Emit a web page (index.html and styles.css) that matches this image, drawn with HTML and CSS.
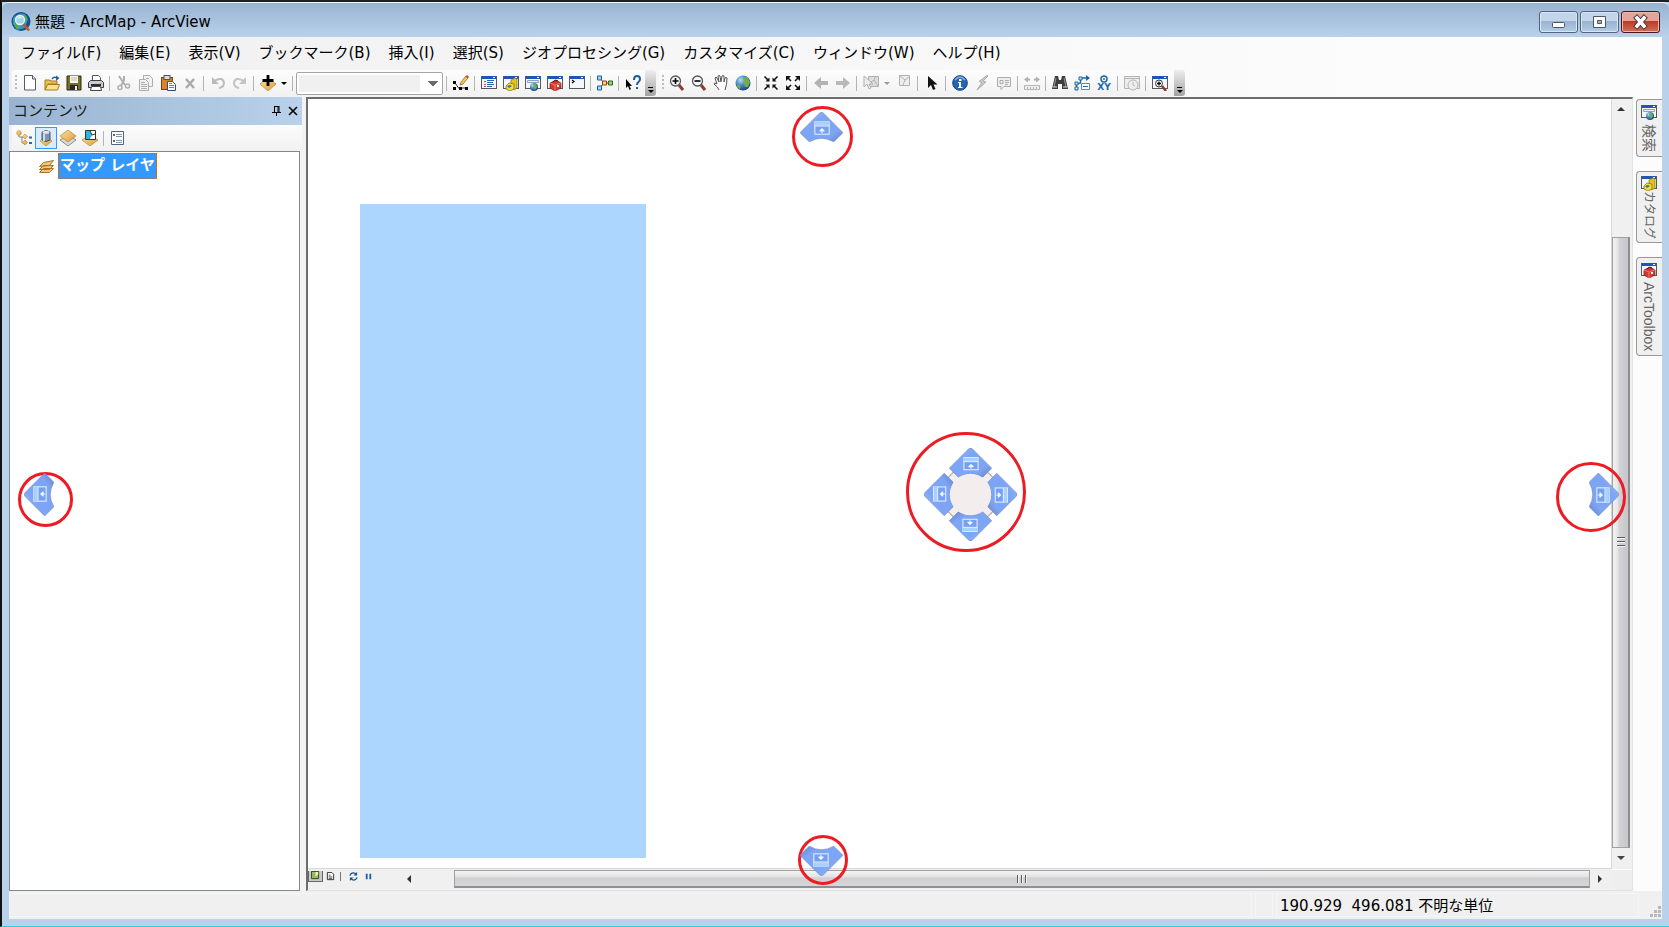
FILE: index.html
```html
<!DOCTYPE html>
<html lang="ja">
<head>
<meta charset="UTF-8" />
<meta name="viewport" content="width=device-width, initial-scale=1" />
<title>無題 - ArcMap - ArcView</title>
<link rel="stylesheet" href="styles.css">
</head>
<body>

<svg class="defs" width="0" height="0" aria-hidden="true">
  <defs>
    <linearGradient id="guide-fill" x1="0" y1="0" x2="1" y2="1">
      <stop offset="0" stop-color="#a9c3f7" />
      <stop offset="0.35" stop-color="#7da5f5" />
      <stop offset="0.75" stop-color="#7da5f5" />
      <stop offset="1" stop-color="#6380bd" />
    </linearGradient>
    <linearGradient id="gold" x1="0" y1="0" x2="1" y2="1">
      <stop offset="0" stop-color="#fbe3a6" />
      <stop offset="1" stop-color="#d99a35" />
    </linearGradient>
    <radialGradient id="globe-fill" cx="0.35" cy="0.3" r="0.8">
      <stop offset="0" stop-color="#b9dcf7" />
      <stop offset="0.5" stop-color="#3b7cc4" />
      <stop offset="1" stop-color="#123a75" />
    </radialGradient>
    <g id="guide">
      <path d="M44 1 Q46 -1 48 1 L67 20 L58 29 Q46 22 34 29 L25 20 Z" fill="url(#guide-fill)" stroke="#7187b8" stroke-width="0.6" />
      <rect x="39.5" y="9.5" width="14" height="12" fill="#76a0f3" stroke="#e8f2ff" />
      <path d="M40 10h13v3h-13z" fill="#a9d2ff" />
      <path d="M39.5 13.5h14" stroke="#e8f2ff" />
      <path d="M46.500 15.500l2.500 2.500v1h-2v1.500h-1v-1.500h-2v-1z" fill="#f2f7ff" />
    </g>
  </defs>
  <symbol id="win" viewBox="0 0 16 16">
    <rect x="0.500" y="1.500" width="15" height="12" fill="#f4f8fc" stroke="#55585c" />
    <path d="M1 1h14v3H1z" fill="#1f56b5" />
    <path d="M12 2h2v1h-2z" fill="#fff" />
  </symbol>
  <symbol id="i-catalog" viewBox="0 0 16 16">
    <use href="#win" width="16" height="16" />
    <path d="M8 5l4-2 2 1v9l-3 2-3-2z" fill="#e0c51c" stroke="#8a7405" stroke-width="0.700" />
    <path d="M3 11l3-3 5 1v5l-4 2-4-2z" fill="#f1dc3d" stroke="#7c6a0a" stroke-width="0.700" />
    <path d="M4 11l3-1 2 1-3 2z" fill="#3b6fa6" />
  </symbol>
  <symbol id="i-search" viewBox="0 0 16 16">
    <use href="#win" width="16" height="16" />
    <path d="M2.500 5.500h11v2h-11z" fill="#eaf0f7" stroke="#8ca3bd" />
    <circle cx="9" cy="12" r="4" fill="url(#globe-fill)" />
    <path d="M8 9l3 0 1 3-2 3-1-2z" fill="#6cb33f" />
  </symbol>
  <symbol id="i-toolbox" viewBox="0 0 16 16">
    <use href="#win" width="16" height="16" />
    <path d="M3 8l6-3 5 3v5l-6 3-5-3z" fill="#d8382b" stroke="#7f1a12" stroke-width="0.700" />
    <path d="M3 8l5 2 6-2M8 10v6" fill="none" stroke="#f18a7d" stroke-width="0.800" />
    <path d="M6 7q2-3 5-1" fill="none" stroke="#531009" />
    <path d="M10 10h2v2h-2z" fill="#fff" />
  </symbol>
</svg>

<header class="titlebar">
  <svg class="app-icon" viewBox="0 0 20 20">
    <circle cx="10" cy="9.500" r="9.500" fill="#12518c" />
    <path d="M2 6q5-6 12-4l3 5-3 9-8 2-4-6z" fill="#3f93b8" />
    <path d="M3 11l4 1 2 4-3 1q-3-3-3-6zM12 2l4 3-1 4-4-3z" fill="#4fae54" />
    <circle cx="9" cy="8" r="4.500" fill="#9fd3ea" stroke="#eef5f8" stroke-width="1.300" />
    <path d="M6.500 7q2-3 4-1" fill="none" stroke="#fff" />
    <path d="M12.500 12l5.500 6.500" stroke="#b65c2a" stroke-width="2.500" />
  </svg>
  <h1>無題 - ArcMap - ArcView</h1>
  <div class="caption-buttons">
    <button type="button" aria-label="最小化"><svg viewBox="0 0 37 20"><rect x="12.500" y="10.500" width="12" height="5" rx="1" fill="#fff" stroke="#4a5568" /></svg></button>
    <button type="button" aria-label="元に戻す"><svg viewBox="0 0 37 20"><path d="M12.500 4.500h12v11h-12zM16.500 8.500v3h4v-3z" fill="#fff" fill-rule="evenodd" stroke="#4a5568" /></svg></button>
    <button type="button" class="close" aria-label="閉じる"><svg viewBox="0 0 37 20"><path d="M15 6l7 8M22 6l-7 8" stroke="#4b3a3e" stroke-width="5.500" stroke-linecap="square" /><path d="M15 6l7 8M22 6l-7 8" stroke="#fff" stroke-width="3.500" stroke-linecap="square" /></svg></button>
  </div>
</header>

<div class="client">
  <nav class="menubar">
    <a href="#">ファイル(F)</a>
    <a href="#">編集(E)</a>
    <a href="#">表示(V)</a>
    <a href="#">ブックマーク(B)</a>
    <a href="#">挿入(I)</a>
    <a href="#">選択(S)</a>
    <a href="#">ジオプロセシング(G)</a>
    <a href="#">カスタマイズ(C)</a>
    <a href="#">ウィンドウ(W)</a>
    <a href="#">ヘルプ(H)</a>
  </nav>

  <div class="toolbars">
    <!-- standard toolbar -->
    <div class="toolbar">
      <span class="grip"></span>
      <button type="button" aria-label="新規"><svg viewBox="0 0 16 16"><path d="M2.500 .5h8l3 3.500v11h-11z" fill="#fff" stroke="#555c66" /><path d="M10.500.5V4h3" fill="#dfe6ee" stroke="#555c66" /></svg></button>
      <button type="button" aria-label="開く"><svg viewBox="0 0 16 16"><path d="M1 5h5l1 1h6v3H4l-3 6z" fill="#e8bf55" stroke="#a67c1b" /><path d="M3.500 9.500h12l-2 5.500H1z" fill="#fbdf8b" stroke="#a67c1b" /><path d="M8 4q2-3 5-1" fill="none" stroke="#2c5f9e" stroke-width="1.500" /><path d="M12 .5l3.500 2.500L12 6z" fill="#2c5f9e" /></svg></button>
      <button type="button" aria-label="保存"><svg viewBox="0 0 16 16"><path d="M1 1h14v14H1z" fill="#77702b" stroke="#2e2b14" /><path d="M4 1h8v7H4z" fill="#f7f7ee" /><path d="M5 3h6M5 5h6" stroke="#b9b9b0" /><path d="M4 10h8v5H4z" fill="#2a2823" /><path d="M9 11h2v4H9z" fill="#f0f0f0" /></svg></button>
      <button type="button" aria-label="印刷"><svg viewBox="0 0 16 16"><path d="M4.500.5h6l2 2V7h-8z" fill="#fff" stroke="#555" /><path d="M.500 7.500l2-2h11l2 2v5H.5z" fill="#c9ccd2" stroke="#3b3e44" /><path d="M3 10h10" stroke="#2c2e33" stroke-width="2" /><path d="M3.500 11.500h9l1 4h-11z" fill="#fff" stroke="#444" /><path d="M12 8h2v1h-2z" fill="#d7a525" /></svg></button>
      <span class="sep"></span>
      <button type="button" disabled aria-label="切り取り"><svg viewBox="0 0 16 16" fill="none" stroke="#b0b0b0"><path d="M3 1l6 9M8 1v4l-3 6" stroke-width="2" /><circle cx="4" cy="12.500" r="2" stroke-width="1.500" /><circle cx="11.500" cy="11" r="2" stroke-width="1.500" /></svg></button>
      <button type="button" disabled aria-label="コピー"><svg viewBox="0 0 16 16" fill="#f2f2f2" stroke="#adadad"><path d="M5.500.5h6l3 3v8h-9z" /><path d="M1.500 4.500h6l3 3v8h-9z" /><path d="M3 7.500h4M3 9.500h6M3 11.500h6M3 13.500h6M8 3.500h3" /></svg></button>
      <button type="button" aria-label="貼り付け"><svg viewBox="0 0 16 16"><rect x="1.500" y="2.500" width="11" height="12" fill="#d6872b" stroke="#7d4410" /><rect x="4" y=".5" width="6" height="4" fill="#d9dce0" stroke="#555" /><path d="M7.500 6.500h5l3 3v6h-8z" fill="#fff" stroke="#2f5179" /><path d="M9 10.500h5M9 12.500h5M9 8.500h3" stroke="#5b82b3" /></svg></button>
      <button type="button" disabled aria-label="削除"><svg viewBox="0 0 16 16"><path d="M4 4l8 9M12 4l-8 9" stroke="#aaa" stroke-width="2.500" /></svg></button>
      <span class="sep"></span>
      <button type="button" disabled aria-label="元に戻す"><svg viewBox="0 0 16 16"><path d="M4 6q9-5 10 2q0 4-5 5" fill="none" stroke="#bbb" stroke-width="2" /><path d="M2 2v7h7z" fill="#bbb" /></svg></button>
      <button type="button" disabled aria-label="やり直し"><svg viewBox="0 0 16 16"><path d="M12 6q-9-5-10 2q0 4 5 5" fill="none" stroke="#c4c4c4" stroke-width="2" /><path d="M14 2v7H7z" fill="#c4c4c4" /></svg></button>
      <span class="sep"></span>
      <button type="button" aria-label="データの追加"><svg viewBox="0 0 16 16"><path d="M8 3l8 6-8 7-8-7z" fill="url(#gold)" stroke="#c58e31" stroke-width="0.800" /><path d="M8 0v11M2.500 5.500h11" stroke="#000" stroke-width="2.800" /></svg></button>
      <button type="button" class="drop" aria-label="データの追加メニュー"></button>
      <span class="sep"></span>
      <select class="scale" aria-label="縮尺"><option></option></select>
      <span class="sep"></span>
      <button type="button" aria-label="エディター"><svg viewBox="0 0 16 16"><path d="M1.500 7l4 6h9" fill="none" stroke="#333" /><path d="M0 6h3v3H0zM0 12h3v3H0zM6 12h3v3H6zM12 12h3v3h-3z" fill="#000" /><path d="M7 10l1-3 5-6 2 2-5 6z" fill="#f0cd50" stroke="#7c5b1d" stroke-width="0.700" /><path d="M12.500 1.500l1.500-1.500 2 2-1.500 1.500z" fill="#c94a33" /></svg></button>
      <span class="sep"></span>
      <button type="button" aria-label="コンテンツ"><svg viewBox="0 0 16 16"><use href="#win" width="16" height="16" /><path d="M3 6.500h2M3 9.500h2M3 11.500h2" stroke="#c43" /><path d="M6 5.500h7M6 7.500h6M6 9.500h7M6 11.500h5" stroke="#2a66b8" /></svg></button>
      <button type="button" aria-label="カタログ"><svg><use href="#i-catalog" /></svg></button>
      <button type="button" aria-label="検索"><svg><use href="#i-search" /></svg></button>
      <button type="button" aria-label="ArcToolbox"><svg><use href="#i-toolbox" /></svg></button>
      <button type="button" aria-label="Python"><svg viewBox="0 0 16 16"><use href="#win" width="16" height="16" /><path d="M3 5l2 1.500L3 8" fill="none" stroke="#000" stroke-width="1.200" /></svg></button>
      <span class="sep"></span>
      <button type="button" aria-label="ModelBuilder"><svg viewBox="0 0 16 16"><path d="M3 3l4 5-4 5M7 8h6" fill="none" stroke="#2d4b6b" /><path d="M.5 1h4v4h-4zM.5 11h4v4h-4z" fill="#a9d4f5" stroke="#1c5f9f" /><path d="M5.500 6h4v4h-4z" fill="#f6d94a" stroke="#a0392a" /><path d="M11.500 6h4v4h-4z" fill="#9cd069" stroke="#2e6a1b" /></svg></button>
      <span class="sep"></span>
      <button type="button" aria-label="ヘルプ"><svg viewBox="0 0 16 16"><path d="M1 4v9l2-2 1.500 4 1.500-1-1.500-3H7z" fill="#000" /><path d="M9 5q0-4 3-4t3 3q0 2-1.500 3T12 10" fill="none" stroke="#1a5d9e" stroke-width="2" /><path d="M11 12h2v2h-2z" fill="#1a5d9e" /></svg></button>
      <button type="button" class="overflow" aria-label="ツールバー オプション"></button>
    </div>

    <!-- tools toolbar -->
    <div class="toolbar">
      <span class="grip"></span>
      <button type="button" aria-label="拡大"><svg viewBox="0 0 16 16"><path d="M10 10l4 5" stroke="#8f3d26" stroke-width="3" /><circle cx="6.500" cy="6" r="5" fill="#f4f8fa" stroke="#54585c" stroke-width="1.300" /><path d="M3.500 6h6M6.500 3v6" stroke="#000" stroke-width="1.600" /></svg></button>
      <button type="button" aria-label="縮小"><svg viewBox="0 0 16 16"><path d="M10 10l4 5" stroke="#8f3d26" stroke-width="3" /><circle cx="6.500" cy="6" r="5" fill="#f4f8fa" stroke="#54585c" stroke-width="1.300" /><path d="M3.500 6h6" stroke="#000" stroke-width="1.600" /></svg></button>
      <button type="button" aria-label="画面移動"><svg viewBox="0 0 16 16"><path d="M6 15q-1-3-5-6q0-2 3 0L2 3q1-2 2 0l2 4-1-6q1-1 2 0l1 6 1-6q1-1 2 0v6l1-4q1-1 2 0q0 7-2 12" fill="#fff" stroke="#555" /></svg></button>
      <button type="button" aria-label="全体表示"><svg viewBox="0 0 16 16"><circle cx="8" cy="8" r="7.500" fill="url(#globe-fill)" /><path d="M8 3l4-1 3 5-2 5-3 0-1-3zM2 9l4 2-1 3-3-2z" fill="#79ad42" /></svg></button>
      <span class="sep"></span>
      <button type="button" aria-label="定率縮小"><svg viewBox="0 0 16 16"><path d="M1.500 1.500l4 4M14.500 1.500l-4 4M1.500 14.500l4-4M14.500 14.500l-4-4" stroke="#111" stroke-width="1.600" /><path d="M6.500 2.500v4h-4zM9.500 2.500v4h4zM6.500 13.500v-4h-4zM9.500 13.500v-4h4z" fill="#111" /></svg></button>
      <button type="button" aria-label="定率拡大"><svg viewBox="0 0 16 16"><path d="M2 2l4 4M14 2l-4 4M2 14l4-4M14 14l-4-4" stroke="#111" stroke-width="1.600" /><path d="M1 1h5L1 6zM15 1h-5l5 5zM1 15h5l-5-5zM15 15h-5l5-5z" fill="#111" /></svg></button>
      <span class="sep"></span>
      <button type="button" disabled aria-label="前の表示"><svg viewBox="0 0 16 16"><path d="M1 8l7-6v4h7v4H8v4z" fill="#b3b3b3" /></svg></button>
      <button type="button" disabled aria-label="次の表示"><svg viewBox="0 0 16 16"><path d="M15 8L8 2v4H1v4h7v4z" fill="#b9b9b9" /></svg></button>
      <span class="sep"></span>
      <button type="button" disabled aria-label="フィーチャ選択"><svg viewBox="0 0 16 16" fill="#eee" stroke="#b0b0b0"><path d="M5.500 1.500h10v10h-10z" fill="#ddd" /><path d="M6 8l5-3 1-4M11 5l4 6" /><path d="M1 1v11l3-3 2 5 2-1-2-4h4z" /></svg></button>
      <button type="button" class="drop" disabled aria-label="選択メニュー"></button>
      <button type="button" disabled class="raised" aria-label="選択解除"><svg viewBox="0 0 16 16" fill="#eee" stroke="#b0b0b0"><path d="M3.500 2.500h10v10h-10z" /><path d="M4 3l5 4 4-3M9 7l-2 5" /></svg></button>
      <span class="sep"></span>
      <button type="button" aria-label="エレメント選択"><svg viewBox="0 0 16 16"><path d="M4 1v12l3-3 2 5 2.500-1-2-4.500h4z" fill="#111" /></svg></button>
      <span class="sep"></span>
      <button type="button" aria-label="個別属性表示"><svg viewBox="0 0 16 16"><circle cx="8" cy="8" r="7.300" fill="#2463b8" stroke="#163f7a" /><path d="M3 5q5-6 10 0" fill="none" stroke="#86b3e8" stroke-width="1.500" /><path d="M7 4h2.500v2H7zM6 7h3v5h1.500v1H6v-1h1V8H6z" fill="#fff" /></svg></button>
      <button type="button" disabled aria-label="ハイパーリンク"><svg viewBox="0 0 16 16"><path d="M13 .5L5 6.500l3 1-5 7.500 9-8-3-1 5-5z" fill="#ccc" stroke="#aaa" /></svg></button>
      <button type="button" disabled aria-label="HTMLポップアップ"><svg viewBox="0 0 16 16" fill="#eee" stroke="#adadad"><path d="M1.500 2.500h13v9H8l-3 3v-3H1.500z" /><path d="M4 5.500h3v3H4zM9 5.500h4M9 7.500h4M9 9.500h3" /></svg></button>
      <span class="sep"></span>
      <button type="button" disabled aria-label="計測"><svg viewBox="0 0 16 16"><path d="M0 4.500l4-3v2h2v2H4v2zM16 4.500l-4-3v2h-2v2h2v2z" fill="#b0b0b0" /><path d="M.5 10.500h15v4H.5zM3.500 12v3M6.500 12v3M9.500 12v3M12.500 12v3" fill="#eee" stroke="#b5b5b5" /></svg></button>
      <span class="sep"></span>
      <button type="button" aria-label="検索"><svg viewBox="0 0 16 16"><path d="M3 1h3l1 4h2l1-4h3l3 13h-6V9H6v5H0z" fill="#3c3c3c" /><path d="M4 3L2 12M12 3l2 9" stroke="#999" /><path d="M1 12h4M11 12h4" stroke="#ddd" /></svg></button>
      <button type="button" aria-label="ルート検索"><svg viewBox="0 0 16 16" fill="none" stroke="#1b67a8"><path d="M2.500 13V9l4-1V3h6" stroke-width="1.300" /><path d="M1 12h3v3H1zM1 7h3v3H1zM5 2h3v3H5z" fill="#cfe4f5" /><path d="M12 0l4 3-4 3z" fill="#1b67a8" stroke="none" /><path d="M7.500 8.500h8v6h-8z" fill="#fff" stroke="#6b8aab" /><path d="M9 11.500h5" /></svg></button>
      <button type="button" aria-label="XY へ移動" class="xy"><svg viewBox="0 0 8 8"><circle cx="4" cy="4" r="3" fill="#fff" stroke="#1b67a8" stroke-width="1.500" /><circle cx="4" cy="4" r="1" fill="#1b67a8" /></svg><span>XY</span></button>
      <span class="sep"></span>
      <button type="button" disabled aria-label="タイム スライダー"><svg viewBox="0 0 16 16" fill="#eee" stroke="#b5b5b5"><path d="M.5 1.500h15v12H.5zM1 3.500h14" /><circle cx="9" cy="10" r="5" /><path d="M9 7v3l2 1" fill="none" /></svg></button>
      <span class="sep"></span>
      <button type="button" aria-label="ビューア ウィンドウ"><svg viewBox="0 0 16 16"><use href="#win" width="16" height="16" /><path d="M10 11l4 5" stroke="#8f3d26" stroke-width="2.500" /><circle cx="7" cy="8.500" r="3.500" fill="#fff" stroke="#333" /><path d="M5 8.500h4M7 6.500v4" stroke="#000" stroke-width="1.300" /></svg></button>
      <button type="button" class="overflow second" aria-label="ツールバー オプション"></button>
    </div>
  </div>

  <main class="workspace">
    <aside class="toc">
      <div class="toc-header">
        <h2>コンテンツ</h2>
        <button type="button" aria-label="自動的に隠す"><svg viewBox="0 0 10 10"><path d="M2.500 0v6M2 .5h5M6 0v6M7 0v6M0 6.500h9M4.500 7v3" fill="none" stroke="#000" /></svg></button>
        <button type="button" aria-label="閉じる"><svg viewBox="0 0 10 10"><path d="M1 1l8 8M9 1L1 9" stroke="#000" stroke-width="1.600" /></svg></button>
      </div>
      <div class="toc-tools">
        <button type="button" aria-label="描画順にリスト"><svg viewBox="0 0 16 16"><path d="M3 4v3h5M6 7v6h3" fill="none" stroke="#888" /><circle cx="3" cy="3" r="2.300" fill="url(#gold)" stroke="#c58e31" stroke-width=".7" /><path d="M9 4l2.500 2.500L9 9 6.500 6.500zM9 10l2.500 2.500L9 15l-2.500-2.500z" fill="url(#gold)" stroke="#c58e31" stroke-width=".7" /><path d="M13 7.500h3M13 13h3" stroke="#2d6b9a" stroke-width="2" /></svg></button>
        <button type="button" class="on" aria-label="ソース別にリスト"><svg viewBox="0 0 16 16"><path d="M8 6l6 5-6 5-6-5z" fill="url(#gold)" stroke="#c58e31" stroke-width=".7" /><path d="M4 2q4-3 8 0v8q-4 3-8 0z" fill="#7f93ab" stroke="#45566b" /><ellipse cx="8" cy="2.200" rx="3.500" ry="1.500" fill="#dde6f0" /><path d="M6 4v7" stroke="#cfdbe8" stroke-width="2" /></svg></button>
        <button type="button" aria-label="表示状態別にリスト"><svg viewBox="0 0 16 16"><path d="M8 5l8 5-8 6-8-6z" fill="#d5d8dc" stroke="#8a8f96" /><path d="M8 0l8 6-8 6-8-6z" fill="url(#gold)" stroke="#c58e31" stroke-width=".8" /></svg></button>
        <button type="button" aria-label="選択状態別にリスト"><svg viewBox="0 0 16 16"><path d="M8 5l8 5-8 6-8-6z" fill="url(#gold)" stroke="#c58e31" stroke-width=".8" /><path d="M3.500.5h10v9h-10z" fill="#fff" stroke="#333" /><path d="M4 1h4l2 4-2 4H4z" fill="#29b8dc" /><path d="M8 1l2 4 3-1" fill="none" stroke="#333" /></svg></button>
        <span class="sep"></span>
        <button type="button" aria-label="オプション"><svg viewBox="0 0 16 16"><path d="M1.500 1.500h12v13h-12z" fill="#fff" stroke="#4e6683" /><circle cx="4" cy="5" r="1" fill="#333" /><circle cx="4" cy="11" r="1" fill="#333" /><path d="M6 4.500h6M6 6.500h6M6 10.500h6M6 12.500h6" stroke="#7e94ad" /></svg></button>
      </div>
      <ul class="tree">
        <li>
          <svg viewBox="0 0 16 16"><path d="M1 14.500l4-4h10l-4 4zM1 11.500l4-4h10l-4 4zM1 8.500l4-4 10-2-4 5z" fill="#f0c677" stroke="#a9732a" /></svg>
          <span class="layer selected">マップ レイヤ</span>
        </li>
      </ul>
    </aside>

    <section class="map">
      <div class="canvas"><div class="dock-preview"></div></div>
      <div class="vscroll">
        <button type="button" class="arrow up" aria-label="上へ"></button>
        <span class="track"></span>
        <span class="thumb"><i></i></span>
        <button type="button" class="arrow down" aria-label="下へ"></button>
      </div>
      <div class="map-foot">
        <div class="views">
          <button type="button" class="pressed" aria-label="データ ビュー"><svg viewBox="0 0 10 10"><path d="M.500.5h8v8h-8z" fill="#8fc15b" stroke="#333" /><path d="M5 1h3v3L5 6z" fill="#ecf3b9" /></svg></button>
          <button type="button" aria-label="レイアウト ビュー"><svg viewBox="0 0 10 10"><path d="M1.500.5h5l2 2v6h-7z" fill="#fff" stroke="#222" /><path d="M3 3.500h2M3 5.500h4M3 7h4" stroke="#444" /></svg></button>
          <span class="bar"></span>
          <button type="button" aria-label="更新"><svg viewBox="0 0 10 10"><path d="M1 4q1-3 4-3 2 0 3 2M9 6q-1 3-4 3-2 0-3-2" fill="none" stroke="#12508f" stroke-width="1.400" /><path d="M9 0v4H5zM1 10V6h4z" fill="#12508f" /></svg></button>
          <button type="button" aria-label="一時停止"><svg viewBox="0 0 10 10"><path d="M2 2h2v6H2zM6 2h2v6H6z" fill="#1d5ba8" /></svg></button>
        </div>
        <div class="hscroll">
          <button type="button" class="arrow left" aria-label="左へ"></button>
          <span class="track"></span>
          <span class="thumb"><i></i></span>
          <button type="button" class="arrow right" aria-label="右へ"></button>
        </div>
      </div>
      <div class="corner"></div>

      <div class="ring ring-center"></div>
      <svg class="compass" viewBox="0 0 92 92">
        <path d="M46 7l39 39-39 39L7 46z" fill="#f3eded" stroke="#a9a4a4" />
        <use href="#guide" />
        <use href="#guide" transform="rotate(90 46 46)" />
        <use href="#guide" transform="rotate(180 46 46)" />
        <use href="#guide" transform="rotate(270 46 46)" />
        <circle cx="46" cy="46" r="20.500" fill="#f3eded" />
      </svg>
    </section>

    <!-- docking targets for the window edges -->
    <div class="ring ring-top"></div>
    <svg class="edge edge-top" viewBox="25 0 42 29"><use href="#guide" /></svg>
    <div class="ring ring-left"></div>
    <svg class="edge edge-left" viewBox="0 25 29 42"><use href="#guide" transform="rotate(270 46 46)" /></svg>
    <div class="ring ring-right"></div>
    <svg class="edge edge-right" viewBox="63 25 29 42"><use href="#guide" transform="rotate(90 46 46)" /></svg>
    <div class="ring ring-bottom"></div>
    <svg class="edge edge-bottom" viewBox="25 63 42 29"><use href="#guide" transform="rotate(180 46 46)" /></svg>
  </main>

  <aside class="side-tabs">
    <button type="button"><svg><use href="#i-search" /></svg><span>検索</span></button>
    <button type="button" class="narrow"><svg><use href="#i-catalog" /></svg><span>カタログ</span></button>
    <button type="button"><svg><use href="#i-toolbox" /></svg><span>ArcToolbox</span></button>
  </aside>

  <footer class="statusbar">
    <span class="cell message"></span>
    <span class="cell small"></span>
    <span class="cell coords">190.929&nbsp; 496.081 不明な単位</span>
    <svg class="size-grip" viewBox="0 0 12 12"><path d="M8 0h3v3H8zM4 4h3v3H4zM8 4h3v3H8zM0 8h3v3H0zM4 8h3v3H4zM8 8h3v3H8z" fill="#b8b8b8" /></svg>
  </footer>
</div>

</body>
</html>
```
FILE: styles.css
```css
* {
  box-sizing: border-box;
}
html, body {
  margin: 0;
  height: 100%;
  overflow: hidden;
}
body {
  display: flex;
  flex-direction: column;
  padding: 0 7px 7px;
  border-top: 2px solid #1c2127;
  border-left: 2px solid #111;
  border-bottom: 1px solid #2bd0e6;
  background: #b9d1ea;
  font: 15px/20px "DejaVu Sans", "Noto Sans CJK JP", sans-serif;
  color: #000;
}
.defs {
  position: absolute;
}
h1, h2, ul {
  margin: 0;
  padding: 0;
  font-size: 15px;
  font-weight: normal;
  list-style: none;
}
button {
  display: flex;
  align-items: center;
  justify-content: center;
  flex: none;
  margin: 0;
  padding: 0;
  border: 0;
  background: none;
  font: inherit;
  color: inherit;
}
svg {
  display: block;
  flex: none;
}

/* title bar */
.titlebar {
  display: flex;
  align-items: center;
  flex: none;
  height: 35px;
  margin: 0 -7px;
  padding: 4px 9px 0;
  border-top: 1px solid #eef5fb;
  border-radius: 6px 6px 0 0;
  background: linear-gradient(#99b4d2, #b9d1ea);
}
.app-icon {
  width: 20px;
  height: 20px;
  margin-right: 4px;
}
.titlebar h1 {
  flex: 1;
}
.caption-buttons {
  display: flex;
  gap: 2px;
}
.caption-buttons button {
  width: 39px;
  height: 22px;
  border: 1px solid #53657c;
  border-radius: 3px;
  background: linear-gradient(#c2d5ea 45%, #98b3d0 46%, #b4cde7);
  box-shadow: inset 0 0 0 1px #d9e6f3;
}
.caption-buttons svg {
  width: 37px;
  height: 20px;
}
.caption-buttons .close {
  border-color: #4b1620;
  background: linear-gradient(#e3a398 45%, #b93a22 46%, #d2705a);
  box-shadow: inset 0 0 0 1px #eab9af;
}

/* client area */
.client {
  display: grid;
  grid-template-columns: minmax(0, 1fr) 29px;
  grid-template-rows: 33px 27px minmax(0, 1fr) 28px;
  flex: 1;
  min-height: 0;
  background: linear-gradient(90deg, #f0f0f0, #fcfcfc 85%);
}
.menubar {
  display: flex;
  align-items: center;
  grid-column: 1 / 3;
  gap: 18px;
  padding: 0 12px 1px;
  white-space: nowrap;
}
.menubar a {
  color: #000;
  text-decoration: none;
}

/* toolbars */
.toolbars {
  display: flex;
  grid-column: 1 / 3;
  gap: 3px;
  padding: 0 0 1px 3px;
}
.toolbar {
  display: flex;
  align-items: center;
  border-radius: 3px;
  background: linear-gradient(#fdfdfd, #f1f1f1);
}
.toolbar button, .toc-tools button {
  width: 22px;
  height: 22px;
}
.toolbar svg, .toc-tools svg {
  width: 16px;
  height: 16px;
}
.grip {
  width: 2px;
  height: 16px;
  margin: 0 2px 0 3px;
  background: repeating-linear-gradient(#bdbdbd 0 2px, transparent 2px 4px);
}
.sep {
  width: 1px;
  height: 15px;
  margin: 0 3px 0 2px;
  background: #b4b4b4;
}
.toolbar .raised {
  padding-bottom: 4px;
}
.toolbar .drop {
  width: 11px;
}
.drop::after {
  content: "";
  margin-right: 2px;
  border: 3px solid transparent;
  border-top-color: #000;
  border-bottom: 0;
}
.drop:disabled::after {
  border-top-color: #999;
}
.scale {
  width: 147px;
  height: 23px;
  margin-right: 1px;
  border: 1px solid #a6a6a6;
  border-radius: 2px;
  appearance: none;
  background:
    linear-gradient(to bottom right, #6b6b6f 50%, transparent 51%) 136px 8px / 5px 5px no-repeat,
    linear-gradient(to bottom left, #6b6b6f 50%, transparent 51%) 131px 8px / 5px 5px no-repeat,
    linear-gradient(#f0f0f0, #f0f0f0) 2px 2px / 121px 17px no-repeat,
    #fff;
}
.toolbar .overflow {
  flex-direction: column;
  justify-content: flex-end;
  width: 11px;
  height: 26px;
  margin-left: 1px;
  padding-bottom: 3px;
  border-radius: 0 3px 3px 0;
  background: linear-gradient(#eee, #a3a3a3);
}
.toolbar .second {
  margin-left: 3px;
}
.overflow::before {
  content: "";
  width: 5px;
  height: 1px;
  margin-bottom: 2px;
  background: #000;
}
.overflow::after {
  content: "";
  border: 3px solid transparent;
  border-top-color: #000;
  border-bottom: 0;
}
.toolbar .xy {
  flex-direction: column;
  color: #1b67a8;
  font: bold 9px/9px "DejaVu Sans", sans-serif;
}
.toolbar .xy svg {
  width: 8px;
  height: 8px;
}

/* workspace */
.workspace {
  position: relative;
  display: grid;
  grid-template-columns: 293px minmax(0, 1fr);
  gap: 4px;
  min-height: 0;
}
.toc {
  display: flex;
  flex-direction: column;
  min-height: 0;
}
.toc-header {
  display: flex;
  align-items: center;
  height: 28px;
  padding: 0 4px;
  gap: 6px;
  background: linear-gradient(90deg, #99b4d1, #b9d1ea);
}
.toc-header h2 {
  flex: 1;
  color: #1c1c1c;
}
.toc-header svg {
  width: 10px;
  height: 10px;
}
.toc-tools {
  display: flex;
  align-items: center;
  height: 26px;
  margin-left: 3px;
  padding-left: 1px;
  border-radius: 3px;
  background: linear-gradient(#fcfcfc, #f1f1f1);
}
.toc-tools .on {
  border: 1px solid #3399ff;
  background: #dcebfb;
}
.tree {
  flex: 1;
  margin-right: 2px;
  padding: 1px 0 0 28px;
  border: 1px solid #828790;
  background: #fff;
}
.tree li {
  display: flex;
  align-items: center;
  gap: 3px;
}
.tree svg {
  width: 17px;
  height: 16px;
}
.layer {
  padding: 1px 1px 3px;
  line-height: 20px;
  font-weight: bold;
}
.selected {
  border: 1px dotted #cc6600;
  background: #3399ff;
  color: #fff;
}

/* map */
.map {
  position: relative;
  display: grid;
  grid-template-columns: minmax(0, 1fr) 20px;
  grid-template-rows: minmax(0, 1fr) 21px;
  border: 1px solid #e3e3e3;
  border-top: 2px solid #6d6d6d;
  border-left: 2px solid #6d6d6d;
  background: #f0f0f0;
}
.canvas {
  background: #fff;
  border-right: 1px solid #d8d8d8;
  border-bottom: 1px solid #d8d8d8;
}
.dock-preview {
  width: 286px;
  height: calc(100% - 115px);
  margin: 105px 0 0 52px;
  background: #add6ff;
}
.vscroll {
  display: flex;
  flex-direction: column;
  padding: 0 2px 1px 0;
}
.map-foot, .views, .hscroll {
  display: flex;
}
.views {
  align-items: center;
  width: 91px;
  height: 14px;
}
.views svg {
  width: 9px;
  height: 9px;
}
.views button {
  width: 15px;
  height: 11px;
}
.views .pressed {
  border: 1px solid #666;
  border-top: 0;
  background: #c9c9c9;
}
.bar {
  width: 1px;
  height: 9px;
  margin: 0 5px 0 2px;
  background: #777;
}
.hscroll {
  flex: 1;
  padding: 1px 2px 2px 0;
}
.arrow {
  width: 17px;
  height: 20px;
}
.arrow::before {
  content: "";
  border: 4px solid transparent;
}
.up::before {
  border-top: 0;
  border-bottom-color: #333;
}
.down::before {
  border-bottom: 0;
  border-top-color: #444;
}
.left::before {
  border-left: 0;
  border-right-color: #333;
}
.right::before {
  border-right: 0;
  border-left-color: #333;
}
.hscroll .arrow {
  width: 20px;
  height: 18px;
}
.thumb {
  display: flex;
  align-items: center;
  justify-content: center;
  border: 1px solid #a0a0a0;
}
.vscroll .track {
  flex: 118;
}
.vscroll .thumb {
  flex: 611;
  border-right: 2px solid #8f8f92;
  background: linear-gradient(90deg, #f2f2f2, #e6e6e8 30%, #d3d3d6 40%, #c6c6cb);
}
.hscroll .track {
  flex: 35;
}
.hscroll .thumb {
  flex: 1136;
  border-bottom: 2px solid #8f8f92;
  background: linear-gradient(#f4f4f4, #e2e2e3 40%, #d0d0d2 45%, #d6d6d8);
}
.vscroll i {
  width: 8px;
  height: 10px;
  background: repeating-linear-gradient(#5d5d60 0 1px, #f5f5f5 1px 2px, transparent 2px 4px);
}
.hscroll i {
  width: 10px;
  height: 8px;
  background: repeating-linear-gradient(90deg, #5d5d60 0 1px, #f5f5f5 1px 2px, transparent 2px 4px);
}
.corner {
  border-top: 1px solid #fff;
  background: #eee;
}

/* docking guides */
.compass, .edge, .ring {
  position: absolute;
}
.compass {
  top: calc(50% - 47px);
  left: calc(50% - 46px);
  width: 93px;
  height: 93px;
}
.ring {
  border: 3px solid #ed1c24;
  border-radius: 50%;
}
.ring-center {
  top: calc(50% - 63px);
  left: calc(50% - 64px);
  width: 120px;
  height: 120px;
}
.edge-top, .edge-bottom {
  left: calc(50% - 21px);
  width: 43px;
  height: 30px;
}
.edge-left, .edge-right {
  top: calc(50% - 21px);
  width: 30px;
  height: 43px;
}
.edge-top {
  top: 15px;
}
.edge-bottom {
  bottom: 15px;
}
.edge-left {
  left: 15px;
}
.edge-right {
  right: 14px;
}
.ring-top {
  top: 9px;
  left: calc(50% - 29px);
  width: 61px;
  height: 61px;
}
.ring-bottom {
  bottom: 6px;
  left: calc(50% - 23px);
  width: 50px;
  height: 50px;
}
.ring-left {
  top: calc(50% - 22px);
  left: 9px;
  width: 55px;
  height: 55px;
}
.ring-right {
  top: calc(50% - 32px);
  right: 7px;
  width: 70px;
  height: 70px;
}

/* auto-hide tabs */
.side-tabs {
  display: flex;
  flex-direction: column;
  align-items: stretch;
  gap: 14px;
  padding: 2px 0 0 3px;
  background: #fcfcfc;
}
.side-tabs button {
  flex-direction: column;
  gap: 4px;
  padding: 4px 1px 4px 0;
  border: 1px solid #999;
  border-right: 0;
  border-radius: 4px 0 0 4px;
  background: #f0f0f0;
  color: #666;
  font: 14px/16px "Liberation Sans", "Noto Sans CJK JP", sans-serif;
}
.side-tabs .narrow {
  gap: 0;
  padding: 3px 1px 3px 0;
  font-size: 12px;
}
.side-tabs span {
  writing-mode: vertical-rl;
  text-orientation: sideways;
}
.side-tabs svg {
  width: 16px;
  height: 16px;
}

/* status bar */
.statusbar {
  display: flex;
  align-items: center;
  grid-column: 1 / 3;
  gap: 3px;
  background: #f0f0f0;
}
.cell {
  height: 24px;
  padding: 2px 3px 0;
  border: 1px solid #f5f5f5;
}
.message {
  flex: 1;
}
.small {
  width: 18px;
}
.coords {
  width: 363px;
}
.size-grip {
  align-self: flex-end;
  width: 12px;
  height: 12px;
  margin: 0 0 1px 8px;
}
```
